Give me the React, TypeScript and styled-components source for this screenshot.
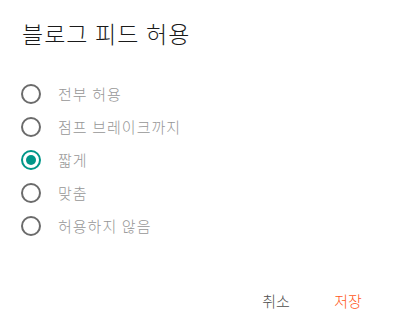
import React, { useState } from 'react';
import styled, { createGlobalStyle } from 'styled-components';

const GlobalStyle = createGlobalStyle`
  html, body {
    margin: 0;
    padding: 0;
    background: #ffffff;
  }
  body {
    font-family: Roboto, "Noto Sans CJK KR", sans-serif;
  }
`;

const Dialog = styled.div`
  width: 400px;
  height: 330px;
  display: flex;
  flex-direction: column;
  box-sizing: border-box;
  padding-top: 22px;
  background: #ffffff;
`;

const Title = styled.h2`
  margin: 0;
  padding-left: 22px;
  font-size: 23px;
  line-height: 28px;
  font-weight: 300;
  letter-spacing: 1px;
  color: #1a1a1a;
  font-family: Roboto, "Noto Sans CJK KR", sans-serif;
`;

const OptionList = styled.div`
  display: flex;
  flex-direction: column;
  margin-top: 27px;
  padding-left: 21px;
`;

const OptionRow = styled.label`
  display: flex;
  align-items: center;
  height: 33px;
  gap: 17px;
  cursor: pointer;
`;

const RadioCircle = styled.span<{ $checked: boolean }>`
  width: 20px;
  height: 20px;
  box-sizing: border-box;
  border-radius: 50%;
  border: 2px solid ${(p) => (p.$checked ? '#009688' : '#6b6b6b')};
  display: flex;
  align-items: center;
  justify-content: center;
  flex-shrink: 0;

  &::after {
    content: '';
    width: 10px;
    height: 10px;
    border-radius: 50%;
    background: #009688;
    display: ${(p) => (p.$checked ? 'block' : 'none')};
  }
`;

const OptionLabel = styled.span`
  font-size: 15px;
  font-weight: 300;
  letter-spacing: 1px;
  color: #969696;
  font-family: Roboto, "Noto Sans CJK KR", sans-serif;
`;

const Actions = styled.div`
  margin-top: auto;
  display: flex;
  justify-content: flex-end;
  gap: 8px;
  padding: 0 20px 12px 0;
`;

const ActionButton = styled.button<{ $accent?: boolean }>`
  min-width: 64px;
  height: 36px;
  padding: 0 8px;
  border: none;
  background: transparent;
  font-size: 15px;
  font-weight: 300;
  font-family: Roboto, "Noto Sans CJK KR", sans-serif;
  color: ${(p) => (p.$accent ? '#ff5722' : '#4d4d4d')};
  cursor: pointer;
`;

const options = ['전부 허용', '점프 브레이크까지', '짧게', '맞춤', '허용하지 않음'];

export default function App() {
  const [selected, setSelected] = useState(2);

  return (
    <>
      <GlobalStyle />
      <Dialog>
        <Title>블로그 피드 허용</Title>
        <OptionList>
          {options.map((opt, i) => (
            <OptionRow key={opt} onClick={() => setSelected(i)}>
              <RadioCircle $checked={selected === i} />
              <OptionLabel>{opt}</OptionLabel>
            </OptionRow>
          ))}
        </OptionList>
        <Actions>
          <ActionButton>취소</ActionButton>
          <ActionButton $accent>저장</ActionButton>
        </Actions>
      </Dialog>
    </>
  );
}
